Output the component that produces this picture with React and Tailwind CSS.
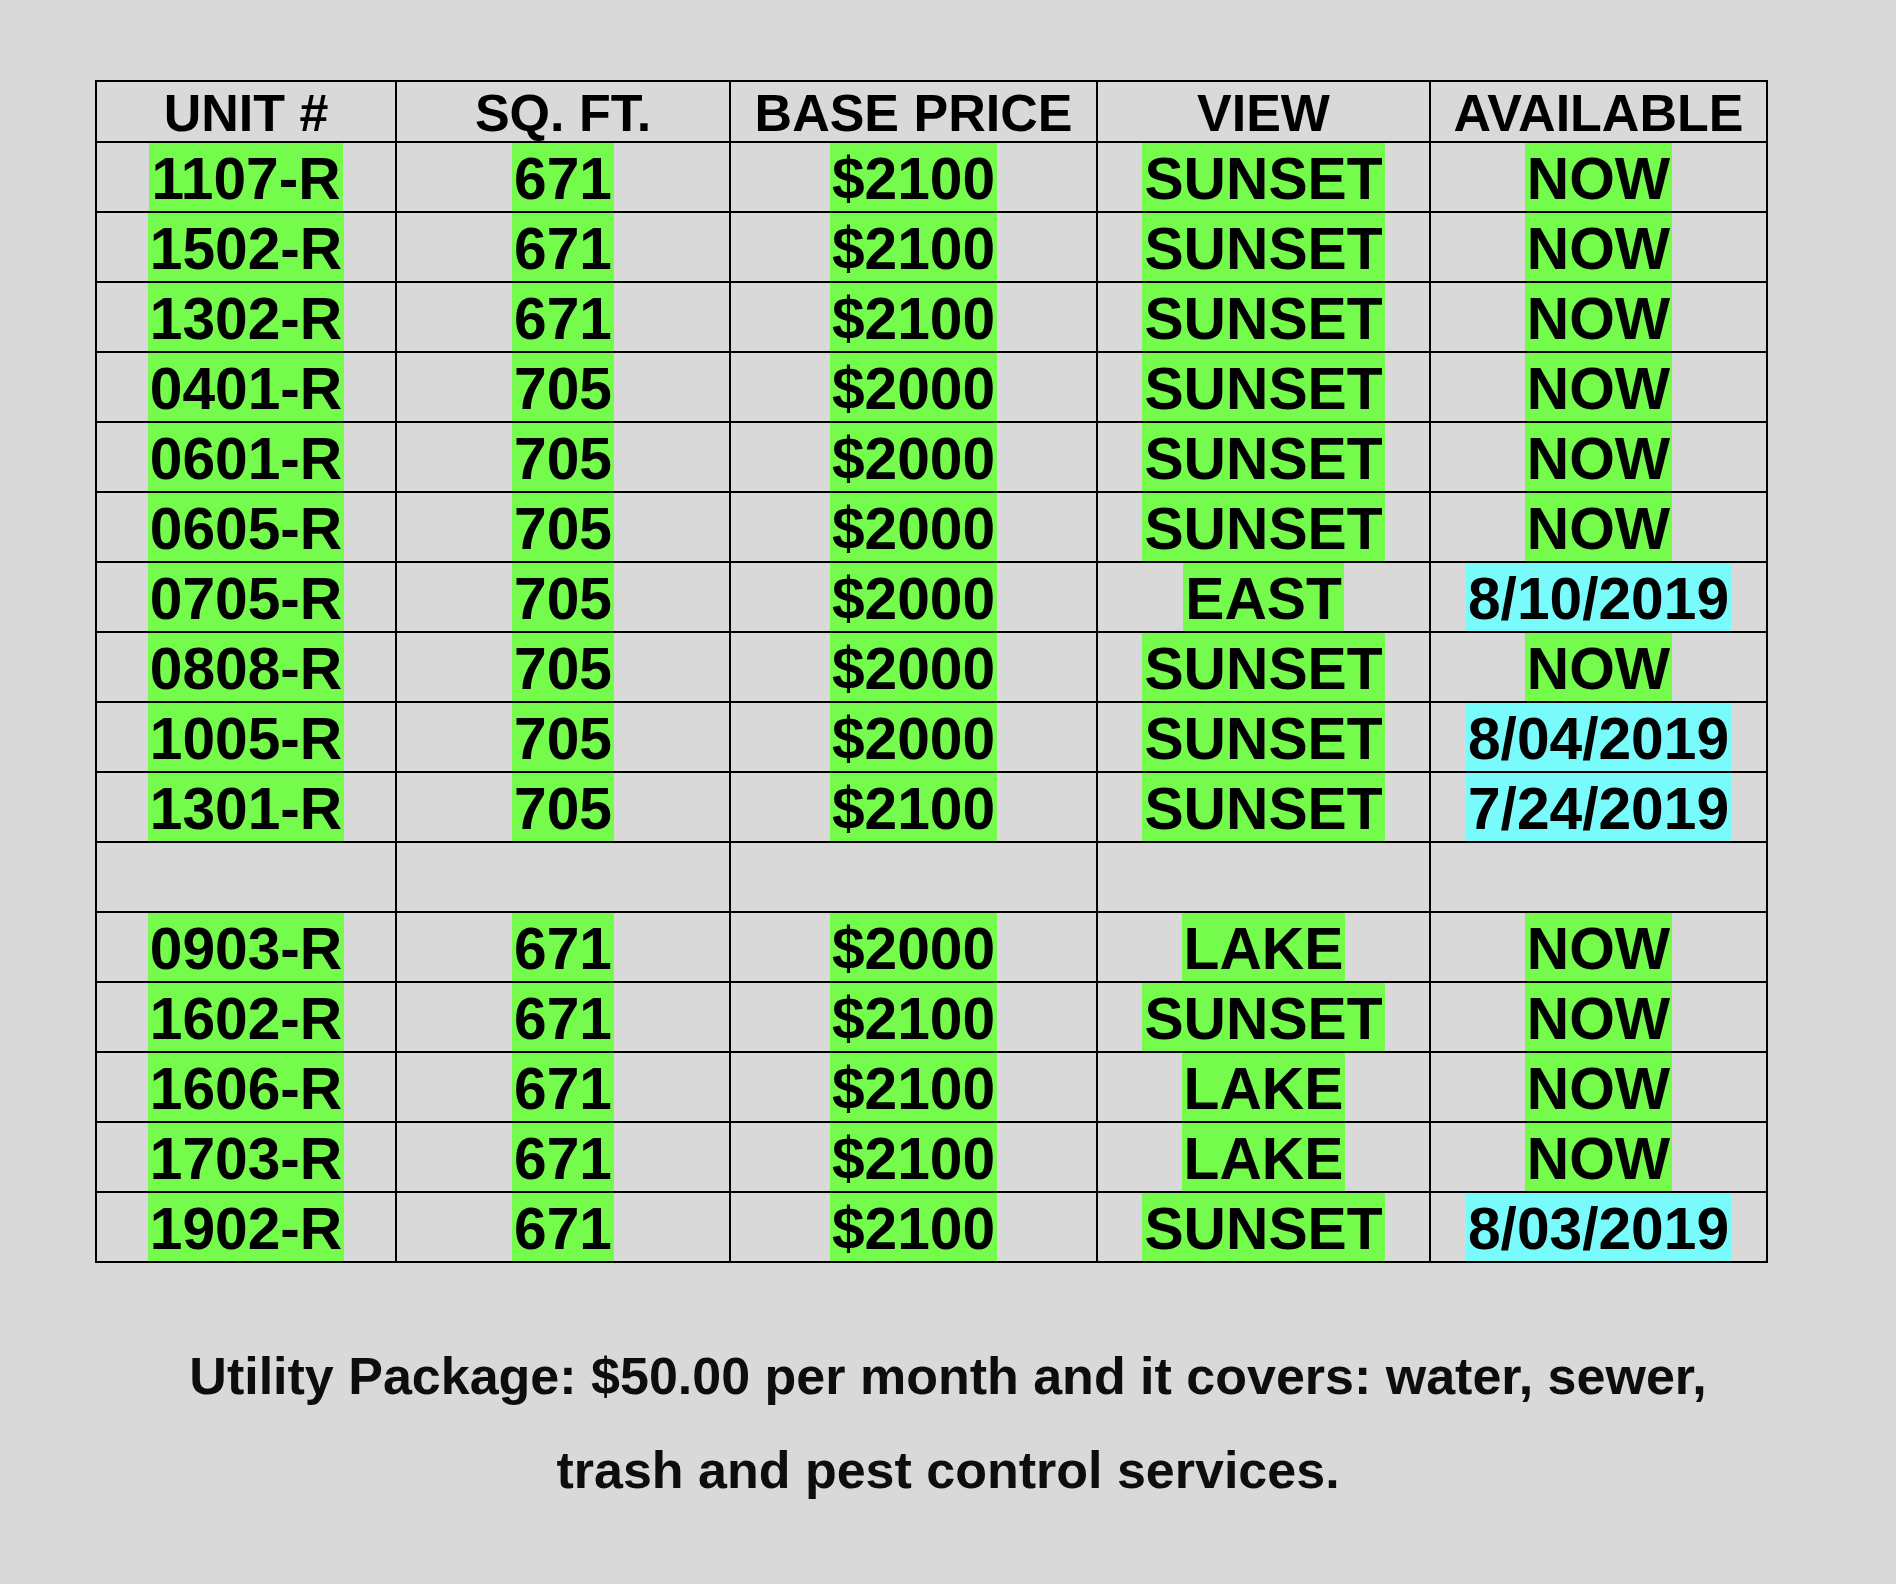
const rows = [
  ["1107-R", "671", "$2100", "SUNSET", "NOW"],
  ["1502-R", "671", "$2100", "SUNSET", "NOW"],
  ["1302-R", "671", "$2100", "SUNSET", "NOW"],
  ["0401-R", "705", "$2000", "SUNSET", "NOW"],
  ["0601-R", "705", "$2000", "SUNSET", "NOW"],
  ["0605-R", "705", "$2000", "SUNSET", "NOW"],
  ["0705-R", "705", "$2000", "EAST", "8/10/2019"],
  ["0808-R", "705", "$2000", "SUNSET", "NOW"],
  ["1005-R", "705", "$2000", "SUNSET", "8/04/2019"],
  ["1301-R", "705", "$2100", "SUNSET", "7/24/2019"],
  null,
  ["0903-R", "671", "$2000", "LAKE", "NOW"],
  ["1602-R", "671", "$2100", "SUNSET", "NOW"],
  ["1606-R", "671", "$2100", "LAKE", "NOW"],
  ["1703-R", "671", "$2100", "LAKE", "NOW"],
  ["1902-R", "671", "$2100", "SUNSET", "8/03/2019"],
];

const headers = ["UNIT #", "SQ. FT.", "BASE PRICE", "VIEW", "AVAILABLE"];

function Cell({ children, header }) {
  return (
    <div
      className={`flex justify-center items-stretch border-r-2 border-b-2 border-black ${
        header ? "h-[61px]" : "h-[70px]"
      }`}
    >
      {children}
    </div>
  );
}

export default function App() {
  return (
    <div
      className="min-h-[1584px] w-[1896px] bg-[#d9d9d9] pt-[80px] text-black"
      style={{ fontFamily: '"Liberation Sans", Arial, sans-serif' }}
    >
      <div className="ml-[95px] w-[1673px] border-t-2 border-l-2 border-black grid grid-cols-[300px_334px_367px_333px_337px] font-bold">
        {headers.map((h) => (
          <Cell header key={h}>
            <span className="flex items-center pt-[3px] text-[52px] leading-none">{h}</span>
          </Cell>
        ))}
        {rows.map((r, i) =>
          r === null
            ? [0, 1, 2, 3, 4].map((j) => <Cell key={`e${j}`} />)
            : r.map((v, j) => {
                const cyan = j === 4 && v !== "NOW";
                return (
                  <Cell key={`${i}-${j}`}>
                    <span
                      className={`flex items-center px-[2px] pt-[4px] text-[58.7px] leading-none ${
                        cyan ? "bg-[#79fbfb]" : "bg-[#75fb4c]"
                      }`}
                    >
                      {v}
                    </span>
                  </Cell>
                );
              })
        )}
      </div>
      <div className="mt-[66px] text-center font-bold text-[52px] leading-[94px] text-[#0d0d0d]">
        <p>Utility Package: $50.00 per month and it covers: water, sewer,</p>
        <p>trash and pest control services.</p>
      </div>
    </div>
  );
}
